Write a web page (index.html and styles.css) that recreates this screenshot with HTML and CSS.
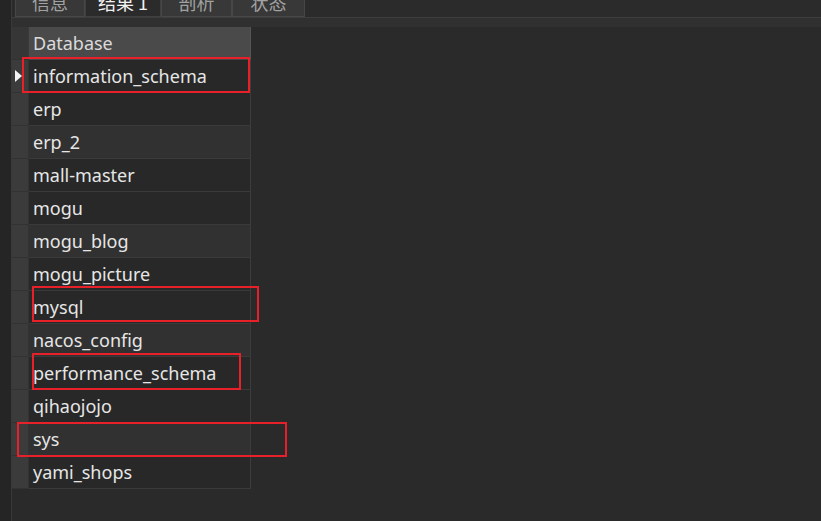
FILE: index.html
```html
<!DOCTYPE html>
<html lang="zh">
<head>
<meta charset="utf-8">
<title>结果 1</title>
<link rel="stylesheet" href="styles.css">
</head>
<body>
<div class="app">
  <div class="side"></div>
  <div class="main">
    <div class="tabbar">
      <div class="tab t1"><span>信息</span></div>
      <div class="tab t2 active"><span>结果 1</span></div>
      <div class="tab t3"><span>剖析</span></div>
      <div class="tab t4"><span>状态</span></div>
    </div>
    <div class="strip"></div>
    <div class="grid">
      <div class="row head"><div class="rh"></div><div class="cell">Database</div></div>
      <div class="row cur"><div class="rh"><svg class="mark" width="7" height="12" viewBox="0 0 7 12"><path d="M0 0 L7 6 L0 12 Z" fill="#f4f4f4"/></svg></div><div class="cell">information_schema</div></div>
      <div class="row"><div class="rh"></div><div class="cell">erp</div></div>
      <div class="row alt"><div class="rh"></div><div class="cell">erp_2</div></div>
      <div class="row"><div class="rh"></div><div class="cell">mall-master</div></div>
      <div class="row"><div class="rh"></div><div class="cell">mogu</div></div>
      <div class="row alt"><div class="rh"></div><div class="cell">mogu_blog</div></div>
      <div class="row"><div class="rh"></div><div class="cell">mogu_picture</div></div>
      <div class="row"><div class="rh"></div><div class="cell">mysql</div></div>
      <div class="row alt"><div class="rh"></div><div class="cell">nacos_config</div></div>
      <div class="row"><div class="rh"></div><div class="cell">performance_schema</div></div>
      <div class="row"><div class="rh"></div><div class="cell">qihaojojo</div></div>
      <div class="row alt"><div class="rh"></div><div class="cell">sys</div></div>
      <div class="row"><div class="rh"></div><div class="cell">yami_shops</div></div>
    </div>
  </div>
  <div class="mark-box b1"></div>
  <div class="mark-box b2"></div>
  <div class="mark-box b3"></div>
  <div class="mark-box b4"></div>
</div>
</body>
</html>
```

FILE: styles.css
```css
html, body {
  margin: 0;
  padding: 0;
}
body {
  background: #2a2a2a;
  width: 821px;
  height: 521px;
  overflow: hidden;
  font-family: "Noto Sans", "Noto Sans CJK SC", sans-serif;
}
.app {
  position: relative;
  display: flex;
  height: 521px;
}
.side {
  width: 11px;
  flex: none;
  background: #252525;
  border-right: 1px solid #393939;
}
.main {
  flex: 1;
  display: flex;
  flex-direction: column;
}
.tabbar {
  height: 17px;
  border-bottom: 1px solid #3d3d3d;
  display: flex;
  padding-left: 3px;
  background: #2b2b2b;
}
.tab {
  height: 17px;
  overflow: hidden;
  box-sizing: border-box;
  background: #383838;
  border: 1px solid #474747;
  border-top: none;
  display: flex;
  justify-content: center;
  color: #a2a2a2;
  font-family: "Noto Sans CJK SC", sans-serif;
  font-size: 18px;
}
.tab span {
  display: block;
  line-height: 18px;
  margin-top: -7px;
}
.tab.active {
  background: #2b2b2b;
  color: #f2f2f2;
  border-color: #3f3f3f;
}
.t1 { width: 70px; }
.t2 { width: 76px; }
.t3 { width: 71px; }
.t4 { width: 73px; }
.strip {
  height: 9px;
  background: #303030;
}
.grid {
  display: flex;
  flex-direction: column;
  width: 239px;
}
.row {
  display: flex;
  height: 33px;
}
.rh {
  width: 17px;
  flex: none;
  box-sizing: border-box;
  background: #3b3b3b;
  border-bottom: 1px solid #323232;
  border-right: 1px solid #333;
  display: flex;
  align-items: center;
  justify-content: flex-end;
}
.mark {
  margin-right: 6px;
}
.cell {
  flex: 1;
  box-sizing: border-box;
  background: #282828;
  border-bottom: 1px solid #3a3a3a;
  border-right: 1px solid #3c3c3c;
  padding-left: 4px;
  line-height: 32px;
  font-size: 18px;
  color: #e6e6e6;
  white-space: nowrap;
}
.row.alt .cell {
  background: #313131;
}
.row.head .rh {
  background: #363636;
  border-right-color: #3a3a3a;
}
.row.head .cell {
  background: #4a4a4a;
  color: #dadada;
  border-bottom-color: #454545;
  border-right-color: #555;
}
.mark-box {
  position: absolute;
  box-sizing: border-box;
  border: 2px solid #e8202a;
}
.b1 { left: 22px; top: 57px; width: 228px; height: 36px; }
.b2 { left: 32px; top: 286px; width: 227px; height: 36px; }
.b3 { left: 32px; top: 353px; width: 209px; height: 37px; }
.b4 { left: 17px; top: 422px; width: 270px; height: 35px; }
```
